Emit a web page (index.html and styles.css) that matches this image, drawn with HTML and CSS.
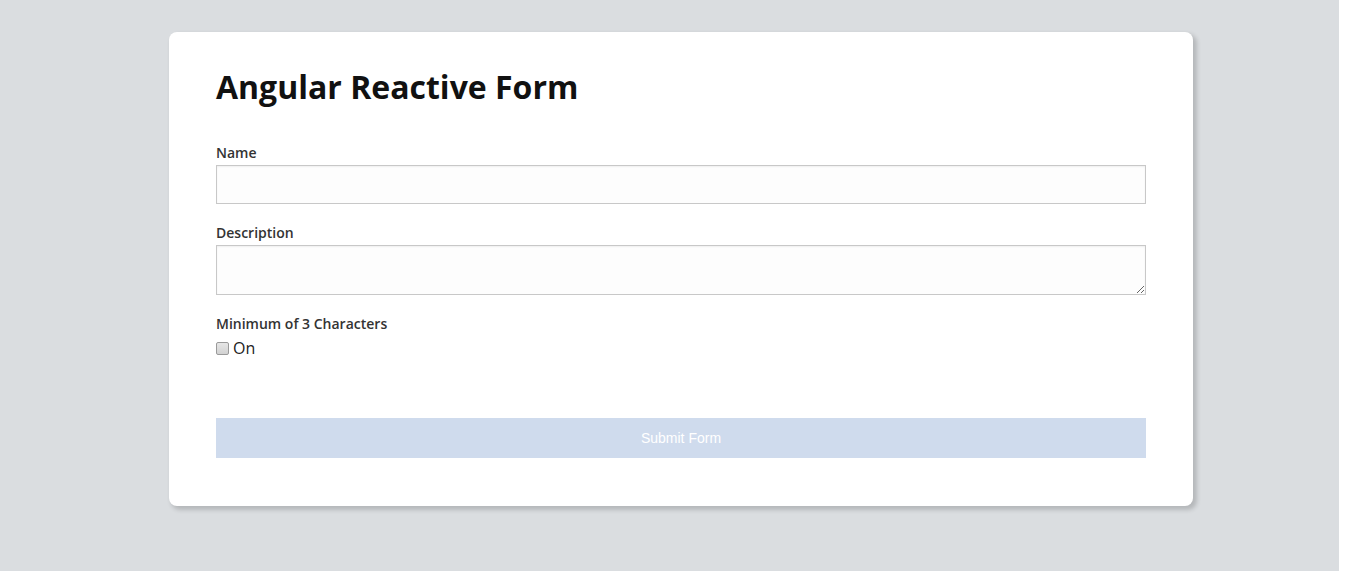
FILE: index.html
```html
<!DOCTYPE html>
<html>
<head>
<meta charset="utf-8">
<title>Angular Reactive Form</title>
<link rel="stylesheet" href="styles.css">
</head>
<body>
<div class="page">
  <div class="card">
    <h1 class="title">Angular Reactive Form</h1>
    <form class="form">
      <div class="field">
        <label class="label" for="name">Name</label>
        <input class="input" id="name" type="text">
      </div>
      <div class="field">
        <label class="label" for="desc">Description</label>
        <textarea class="textarea" id="desc"></textarea>
      </div>
      <div class="field">
        <div class="label">Minimum of 3 Characters</div>
        <label class="check"><input type="checkbox" class="checkbox"><span>On</span></label>
      </div>
      <button type="button" class="submit" disabled>Submit Form</button>
    </form>
  </div>
</div>
</body>
</html>
```
FILE: styles.css
```css
html, body {
  margin: 0;
  padding: 0;
  background: #ffffff;
}
.page {
  width: 1339px;
  height: 571px;
  background: #dadde0;
  padding-top: 32px;
  box-sizing: border-box;
  overflow: hidden;
}
.card {
  margin-left: 169px;
  width: 1024px;
  box-sizing: border-box;
  background: #fff;
  border-radius: 8px;
  padding: 38px 47px 48px;
  box-shadow: 3px 3px 4px 1px rgba(0,0,0,0.17);
  font-family: "Open Sans", sans-serif;
  color: #111;
}
.title {
  margin: 0;
  font-size: 32px;
  line-height: 34px;
  font-weight: 700;
  color: #111;
}
.form {
  margin-top: 39px;
  display: flex;
  flex-direction: column;
}
.field {
  display: flex;
  flex-direction: column;
  margin-bottom: 19px;
}
.label {
  font-size: 14px;
  line-height: 20px;
  font-weight: 600;
  color: #333;
  margin-bottom: 2px;
}
.input, .textarea {
  display: block;
  width: 100%;
  box-sizing: border-box;
  border: 1px solid #c8c8c8;
  box-shadow: inset 0 1px 2px rgba(0,0,0,0.06);
  background: #fdfdfd;
  font-family: "Open Sans", sans-serif;
  font-size: 14px;
  margin: 0;
  padding: 6px 8px;
  border-radius: 0;
}
.input {
  height: 39px;
}
.textarea {
  height: 50px;
  resize: vertical;
}
.check {
  display: flex;
  align-items: center;
  font-size: 16px;
  line-height: 22px;
  color: #222;
  font-weight: 400;
  margin-top: 1px;
}
.checkbox {
  -webkit-appearance: none;
  appearance: none;
  margin: 0 4px 0 0;
  width: 13px;
  height: 13px;
  box-sizing: border-box;
  border: 1px solid #9a9a9a;
  border-radius: 2px;
  background: linear-gradient(#e6e6e6, #d2d2d2);
}
.field:nth-child(3) {
  margin-bottom: 59px;
}
.submit {
  height: 40px;
  width: 100%;
  border: none;
  background: #cfdbed;
  color: #fff;
  font-family: "Liberation Sans", Arial, sans-serif;
  font-size: 14px;
  padding: 0;
  margin: 0;
}
```
